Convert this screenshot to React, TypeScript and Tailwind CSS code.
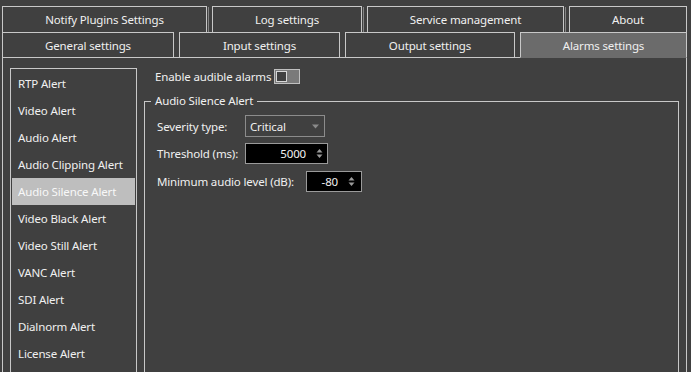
import React from "react";

const B = "border-[#c8c8c8]";

function TopTab({ w, label }: { w: string; label: string }) {
  return (
    <div className={`${w} h-full border-t border-l border-r ${B} flex items-center justify-center pt-px`}>
      {label}
    </div>
  );
}

function Shadow() {
  return (
    <div className="flex h-full">
      <div className="w-px" />
      <div className="w-px bg-[#858585] mt-[1px]" />
      <div className="w-[3px]" />
    </div>
  );
}

function Gap() {
  return <div className={`w-[5px] h-full border-b ${B}`} />;
}

function BotTab({ w, label, active }: { w: string; label: string; active?: boolean }) {
  return (
    <div
      className={`${w} h-full border-t border-l border-r ${B} flex items-center justify-center pt-px ${
        active ? "bg-[#6b6b6b] border-b border-b-[#6b6b6b]" : "border-b"
      }`}
    >
      {label}
    </div>
  );
}

const items = [
  "RTP Alert",
  "Video Alert",
  "Audio Alert",
  "Audio Clipping Alert",
  "Audio Silence Alert",
  "Video Black Alert",
  "Video Still Alert",
  "VANC Alert",
  "SDI Alert",
  "Dialnorm Alert",
  "License Alert",
];

function SpinArrows() {
  return (
    <svg width="7" height="11" viewBox="0 0 7 11" className="shrink-0">
      <path d="M3.5 1 L6.5 4.5 L0.5 4.5 Z" fill="#9a9a9a" />
      <path d="M0.5 6.5 L6.5 6.5 L3.5 10 Z" fill="#9a9a9a" />
    </svg>
  );
}

export default function App() {
  return (
    <div className="w-[691px] h-[372px] bg-[#404040] overflow-hidden text-[11.5px] tracking-[-0.15px] leading-none text-[#f0f0f0] font-['Noto_Sans','Open_Sans',sans-serif]">
      <div className="pt-[6px] pl-[2px]">
        <div className="flex h-[26px]">
          <TopTab w="w-[205px]" label="Notify Plugins Settings" />
          <Shadow />
          <TopTab w="w-[150px]" label="Log settings" />
          <Shadow />
          <TopTab w="w-[197px]" label="Service management" />
          <Shadow />
          <TopTab w="w-[118px]" label="About" />
        </div>
        <div className="flex h-[26px]">
          <BotTab w="w-[172px]" label="General settings" />
          <Gap />
          <BotTab w="w-[161px]" label="Input settings" />
          <Gap />
          <BotTab w="w-[170px]" label="Output settings" />
          <Gap />
          <BotTab w="w-[167px]" label="Alarms settings" active />
        </div>
        <div className={`w-[685px] h-[330px] border-l border-r ${B} flex`}>
          <div className={`ml-[7px] mt-[10px] w-[127px] h-[320px] border ${B} p-px`}>
            {items.map((it) => (
              <div
                key={it}
                className={`h-[27px] pl-[6px] pt-px flex items-center whitespace-nowrap ${
                  it === "Audio Silence Alert" ? "bg-[#bebebe] text-[#f8f8f8]" : ""
                }`}
              >
                {it}
              </div>
            ))}
          </div>
          <div className="ml-[7px] pt-[11px] flex flex-col">
            <div className="flex items-center h-[15px] pl-[11px]">
              <span className="w-[119px] whitespace-nowrap pt-px">Enable audible alarms</span>
              <div className="w-[26px] h-[15px] border border-[#c0c0c0] bg-[#7a7a7a] flex p-px">
                <div className="w-[11px] h-full border border-[#d8d8d8] bg-[#404040]" />
              </div>
            </div>
            <div className={`relative mt-[17px] w-[535px] h-[300px] border-t border-l border-r ${B}`}>
              <div className="absolute left-[6px] -top-[7px] px-[4px] bg-[#404040] whitespace-nowrap">
                Audio Silence Alert
              </div>
              <div className="pl-[12px] pt-[13px] flex flex-col">
                <div className="flex items-center h-[22px]">
                  <span className="w-[88px] whitespace-nowrap pt-px">Severity type:</span>
                  <div className="w-[80px] h-[22px] border border-[#8c8c8c] flex items-center pl-[4px] pr-[5px] justify-between">
                    <span className="pt-px">Critical</span>
                    <svg width="7" height="5" viewBox="0 0 7 5">
                      <path d="M0 0.5 L7 0.5 L3.5 4.5 Z" fill="#8a8a8a" />
                    </svg>
                  </div>
                </div>
                <div className="flex items-center h-[21px] mt-[6px]">
                  <span className="w-[88px] whitespace-nowrap pt-px">Threshold (ms):</span>
                  <div className="w-[83px] h-[21px] border border-[#9a9a9a] bg-black flex items-center justify-end pr-[4px] gap-[10px]">
                    <span className="pt-px">5000</span>
                    <SpinArrows />
                  </div>
                </div>
                <div className="flex items-center h-[21px] mt-[7px]">
                  <span className="w-[149px] whitespace-nowrap pt-px">Minimum audio level (dB):</span>
                  <div className="w-[56px] h-[21px] border border-[#9a9a9a] bg-black flex items-center justify-end pr-[6px] gap-[10px]">
                    <span className="pt-px">-80</span>
                    <SpinArrows />
                  </div>
                </div>
              </div>
            </div>
          </div>
        </div>
      </div>
    </div>
  );
}
